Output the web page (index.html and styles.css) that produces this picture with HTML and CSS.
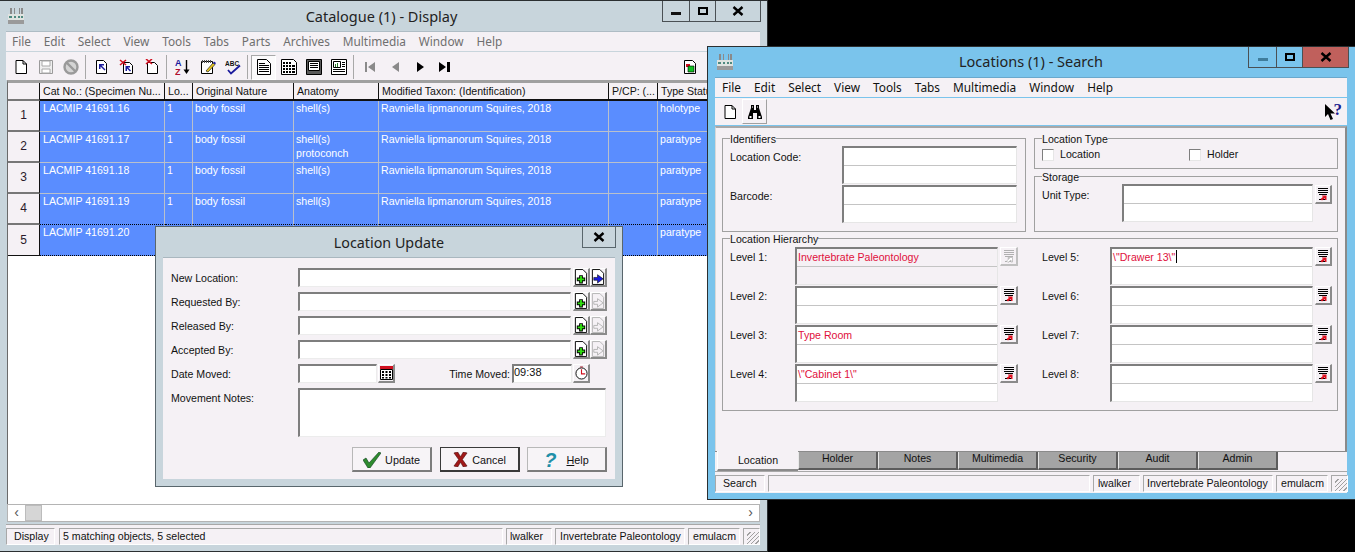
FILE: index.html
```html
<!DOCTYPE html>
<html>
<head>
    <meta charset="utf-8">
    <title>Catalogue (1) - Display</title>
    <link rel="stylesheet" href="styles.css">
</head>
<body>

<svg class="defs" xmlns="http://www.w3.org/2000/svg">
    <symbol id="i-app" viewBox="0 0 16 16">
        <path d="M2 0h2v6H2zM6 0h1v6H6zM11 0h1v6h-1zM13 0h2v6h-2z" fill="#8a8a8a"/>
        <path d="M0 6h16v6H0z" fill="#dfe3e0"/>
        <path d="M1 8h3v2H1zM6 8h2v2H6zM10 8h2v2h-2zM13 8h2v2h-2z" fill="#4f8a80"/>
        <path d="M0 12h16v4H0z" fill="#9a9a9a"/>
    </symbol>
    <symbol id="i-new" viewBox="0 0 16 16">
        <path d="M3 1.500h7l3.500 3.500v9.500H3z" fill="#fff" stroke="#000"/>
        <path d="M10 1.500V5h3.500" fill="none" stroke="#000"/>
    </symbol>
    <symbol id="i-save" viewBox="0 0 16 16">
        <path d="M1.500 1.500h13v13h-13z" fill="#efefef" stroke="#9a9a9a"/>
        <path d="M4 2h8v5H4zM4 10h8v4H4z" fill="#fff" stroke="#a8a8a8"/>
    </symbol>
    <symbol id="i-no" viewBox="0 0 16 16">
        <circle cx="8" cy="8" r="6.500" fill="#d4d4d4" stroke="#9a9a9a" stroke-width="2.400"/>
        <path d="M3.500 3.500l9 9" stroke="#9a9a9a" stroke-width="2.400"/>
    </symbol>
    <symbol id="i-doc-up" viewBox="0 0 16 16">
        <path d="M2.500 1.500h7l3 3v10h-10z" fill="#fff" stroke="#000"/>
        <path d="M5 5v5h1.500V7.500l4 4 1-1-4-4H10V5z" fill="#1a1a9c"/>
    </symbol>
    <symbol id="i-doc-x" viewBox="0 0 16 16">
        <path d="M4.500 3.500h6l3 3v8h-9z" fill="#fff" stroke="#000"/>
        <path d="M6.500 7v5H8V9.500l3 3 1-1-3-3h2V7z" fill="#1a1a9c"/>
        <path d="M1 1l6 5M7 1L1 6" stroke="#d01020" stroke-width="1.600"/>
    </symbol>
    <symbol id="i-doc-x2" viewBox="0 0 16 16">
        <path d="M3.500 3.500h7l3 3v8h-10z" fill="#fff" stroke="#000"/>
        <path d="M2 0l6 5M8 0L2 5" stroke="#d01020" stroke-width="1.600"/>
    </symbol>
    <symbol id="i-note" viewBox="0 0 16 16">
        <path d="M1.500 2.500h11v12h-11z" fill="#fff" stroke="#000"/>
        <path d="M2.500 1v3M4.500 1v3M6.500 1v3M8.500 1v3M10.500 1v3" stroke="#555"/>
        <path d="M6 12l7-8 2 1.500-7 7.500z" fill="#e8c820" stroke="#222" stroke-width=".7"/>
        <path d="M13 4l2 1.500 1-1.500-2-1.500z" fill="#1a1a9c"/>
    </symbol>
    <symbol id="i-form" viewBox="0 0 16 16">
        <path d="M1.500 .5h9l4 4v11h-13z" fill="#fff" stroke="#000"/>
        <path d="M3 4.500h6M3 6.500h10M3 8.500h10M3 10.500h10M3 12.500h10" stroke="#000"/>
    </symbol>
    <symbol id="i-grid" viewBox="0 0 16 16">
        <path d="M.5 .5h12l3 3v12H.5z" fill="#fff" stroke="#000"/>
        <path d="M2 3h2v2H2zM5 3h2v2H5zM8 3h2v2H8zM2 6h2v2H2zM5 6h2v2H5zM8 6h2v2H8zM11 6h3v2h-3zM2 9h2v2H2zM5 9h2v2H5zM8 9h2v2H8zM11 9h3v2h-3zM2 12h2v2H2zM5 12h2v2H5zM8 12h2v2H8zM11 12h3v2h-3z" fill="#000"/>
    </symbol>
    <symbol id="i-page" viewBox="0 0 16 16">
        <path d="M.5 .5h15v15H.5z" fill="#5a5a5a" stroke="#000"/>
        <path d="M2.500 2.500h11v9h-11z" fill="#fff" stroke="#000"/>
        <path d="M4 4.500h8M4 6.500h8M4 8.500h8" stroke="#000"/>
    </symbol>
    <symbol id="i-media" viewBox="0 0 16 16">
        <path d="M.5 .5h15v15H.5z" fill="#fff" stroke="#000"/>
        <path d="M2.500 2.500h7v6h-7z" fill="#fff" stroke="#000"/>
        <path d="M4 5h1v3H4zM6 4h1v4H6z" fill="#2a7a2a"/>
        <path d="M11 3.500h3M11 5.500h3M11 7.500h3M2 10.500h12M2 12.500h12" stroke="#000"/>
    </symbol>
    <symbol id="i-first" viewBox="0 0 16 16">
        <path d="M3 3h2v10H3zM13 3v10L6 8z"/>
    </symbol>
    <symbol id="i-prev" viewBox="0 0 16 16">
        <path d="M12 3v10L5 8z"/>
    </symbol>
    <symbol id="i-next" viewBox="0 0 16 16">
        <path d="M5 3v10l7-5z"/>
    </symbol>
    <symbol id="i-last" viewBox="0 0 16 16">
        <path d="M2 3v10l7-5zM10 3h3v10h-3z"/>
    </symbol>
    <symbol id="i-doc-green" viewBox="0 0 16 16">
        <path d="M2.500 1.500h8l3 3v10h-11z" fill="#fff" stroke="#000"/>
        <path d="M4 5h4v3H4z" fill="#d01020"/>
        <path d="M6 7h6v6H6z" fill="#10c020" stroke="#000" stroke-width=".6"/>
    </symbol>
    <symbol id="i-binoc" viewBox="0 0 16 16">
        <path d="M4 1h3v5h2V1h3v3l3 9v2H10V9H6v6H1v-2l3-9z" fill="#000"/>
        <path d="M2.500 12h2v2h-2zM11.500 12h2v2h-2z" fill="#fff"/>
        <path d="M5 2h1v2H5zM10 2h1v2h-1z" fill="#8a8a8a"/>
    </symbol>
    <symbol id="i-arrow" viewBox="0 0 10 16">
        <path d="M0 0v13l3-3 2.500 6 2.500-1-2.500-5.500H10z" fill="#000"/>
    </symbol>
    <symbol id="i-lookup" viewBox="0 0 14 14">
        <path d="M2 1.500h10M2 3.500h10M2 5.500h10" stroke="#000"/>
        <path d="M3 7.500h8M3 12.500h6" stroke="#000"/>
        <path d="M6 8.500h4.500V13H9v-2l-3 2.500L4.500 12l3-2.500H6z" fill="#e01020"/>
    </symbol>
    <symbol id="i-lookup-off" viewBox="0 0 14 14">
        <path d="M2 1.500h10M2 3.500h10M2 5.500h10M3 7.500h8M3 12.500h6" stroke="#b0b0b0"/>
        <path d="M6 8.500h4.500V13H9v-2l-3 2.500L4.500 12l3-2.500H6z" fill="#fff" stroke="#b0b0b0" stroke-width=".7"/>
    </symbol>
    <symbol id="i-add" viewBox="0 0 15 17">
        <path d="M1.500 .5h8l4 4v12h-12z" fill="#fff" stroke="#000"/>
        <path d="M5.500 6.500h4v2.500h2.500v4H9.500v2.500h-4V13H3V9h2.500z" fill="#000"/>
        <path d="M6.500 7.500h2V10H11v2H8.500v2.500h-2V12H4v-2h2.500z" fill="#30e010"/>
    </symbol>
    <symbol id="i-go" viewBox="0 0 15 17">
        <path d="M1.500 .5h8l4 4v12h-12z" fill="#fff" stroke="#000"/>
        <path d="M3 9h4V6l6 4.500L7 15v-3H3z" fill="#1a1ae0" stroke="#000" stroke-width=".6"/>
    </symbol>
    <symbol id="i-go-off" viewBox="0 0 15 17">
        <path d="M1.500 .5h8l4 4v12h-12z" fill="none" stroke="#b4b4b4"/>
        <path d="M3 9h4V6l6 4.500L7 15v-3H3z" fill="#f5f1f5" stroke="#b4b4b4"/>
    </symbol>
    <symbol id="i-cal" viewBox="0 0 13 14">
        <path d="M0 0h13v3H0z" fill="#d01020"/>
        <path d="M.5 3.500h12v10H.5z" fill="#fff" stroke="#000"/>
        <path d="M2 5h2v2H2zM5.500 5h2v2h-2zM9 5h2v2H9zM2 8h2v2H2zM5.500 8h2v2h-2zM9 8h2v2H9zM2 11h2v1.500H2zM5.500 11h2v1.500h-2zM9 11h2v1.500H9z" fill="#000"/>
    </symbol>
    <symbol id="i-clock" viewBox="0 0 14 14">
        <circle cx="7" cy="7.500" r="6" fill="#fff" stroke="#000"/>
        <path d="M5.500 .5h3" stroke="#a01020"/>
        <path d="M7 3v5h4" fill="none" stroke="#d01020" stroke-width="1.200"/>
    </symbol>
    <symbol id="i-check" viewBox="0 0 18 16">
        <path d="M0 8l3-2 3 5L16 0l2 1L7 16H5z" fill="#2e8b2e" stroke="#0e3e1e" stroke-width=".6"/>
    </symbol>
    <symbol id="i-cross" viewBox="0 0 16 16">
        <path d="M1 1l4-1 3 5 3-5 4 1-5 7 5 7-4 1-3-5-3 5-4-1 5-7z" fill="#a01818" stroke="#4a0808" stroke-width=".6"/>
    </symbol>
    <symbol id="i-close" viewBox="0 0 12 10">
        <path d="M1.500 1l9 8M10.500 1l-9 8" stroke="#000" stroke-width="2.400"/>
    </symbol>
</svg>

<section class="win win-cat">
    <header class="titlebar">
        <svg class="app-ico"><use href="#i-app"/></svg>
        <h1 class="title title-cat">Catalogue (1) - Display</h1>
        <div class="caption">
            <span class="cap cap-min"><i class="glyph-min"></i></span>
            <span class="cap cap-max"><i class="glyph-max"></i></span>
            <span class="cap cap-close"><svg class="glyph-x"><use href="#i-close"/></svg></span>
        </div>
    </header>
    <nav class="menu menu-off">
        <span>File</span><span>Edit</span><span>Select</span><span>View</span><span>Tools</span><span>Tabs</span><span>Parts</span><span>Archives</span><span>Multimedia</span><span>Window</span><span>Help</span>
    </nav>
    <div class="toolbar">
        <span class="tb"><svg class="ico"><use href="#i-new"/></svg></span>
        <span class="tb"><svg class="ico"><use href="#i-save"/></svg></span>
        <span class="tb"><svg class="ico"><use href="#i-no"/></svg></span>
        <span class="tb-sep"></span>
        <span class="tb"><svg class="ico"><use href="#i-doc-up"/></svg></span>
        <span class="tb"><svg class="ico"><use href="#i-doc-x"/></svg></span>
        <span class="tb"><svg class="ico"><use href="#i-doc-x2"/></svg></span>
        <span class="tb-sep"></span>
        <span class="tb">
            <svg class="ico" viewBox="0 0 16 16">
                <text x="0" y="7" class="svg-az" fill="#1a1a9c">A</text>
                <text x="0" y="15.500" class="svg-az" fill="#b01030">Z</text>
                <path d="M11.500 1v10" stroke="#000" stroke-width="1.400"/>
                <path d="M8.500 10.500h6L11.500 15z" fill="#000"/>
            </svg>
        </span>
        <span class="tb"><svg class="ico"><use href="#i-note"/></svg></span>
        <span class="tb">
            <svg class="ico" viewBox="0 0 16 16">
                <text x="0" y="6.500" class="svg-abc" fill="#111">ABC</text>
                <path d="M3 11l3 3.500L15 6.500" fill="none" stroke="#1a1a9c" stroke-width="1.800"/>
            </svg>
        </span>
        <span class="tb-sep"></span>
        <span class="tb tb-on"><svg class="ico"><use href="#i-form"/></svg></span>
        <span class="tb"><svg class="ico"><use href="#i-grid"/></svg></span>
        <span class="tb"><svg class="ico"><use href="#i-page"/></svg></span>
        <span class="tb"><svg class="ico"><use href="#i-media"/></svg></span>
        <span class="tb-sep"></span>
        <span class="tb tb-grey"><svg class="ico"><use href="#i-first"/></svg></span>
        <span class="tb tb-grey"><svg class="ico"><use href="#i-prev"/></svg></span>
        <span class="tb"><svg class="ico"><use href="#i-next"/></svg></span>
        <span class="tb"><svg class="ico"><use href="#i-last"/></svg></span>
        <span class="tb tb-push"><svg class="ico"><use href="#i-doc-green"/></svg></span>
        <span class="tb"><svg class="ico"><use href="#i-new"/></svg></span>
    </div>

    <div class="gridwrap">
        <table class="grid">
            <colgroup>
                <col class="c-head"><col class="c-cat"><col class="c-lo"><col class="c-nat"><col class="c-ana"><col class="c-tax"><col class="c-pcp"><col class="c-type">
            </colgroup>
            <thead>
                <tr>
                    <th class="rowhead"></th>
                    <th>Cat No.: (Specimen Nu...</th>
                    <th>Lo...</th>
                    <th>Original Nature</th>
                    <th>Anatomy</th>
                    <th>Modified Taxon: (Identification)</th>
                    <th>P/CP: (...</th>
                    <th>Type Status</th>
                </tr>
            </thead>
            <tbody>
                <tr>
                    <th class="rowhead">1</th>
                    <td>LACMIP 41691.16</td><td>1</td><td>body fossil</td><td>shell(s)</td><td>Ravniella lipmanorum Squires, 2018</td><td></td><td>holotype</td>
                </tr>
                <tr>
                    <th class="rowhead">2</th>
                    <td>LACMIP 41691.17</td><td>1</td><td>body fossil</td><td>shell(s)<br>protoconch</td><td>Ravniella lipmanorum Squires, 2018</td><td></td><td>paratype</td>
                </tr>
                <tr>
                    <th class="rowhead">3</th>
                    <td>LACMIP 41691.18</td><td>1</td><td>body fossil</td><td>shell(s)</td><td>Ravniella lipmanorum Squires, 2018</td><td></td><td>paratype</td>
                </tr>
                <tr class="row-before-focus">
                    <th class="rowhead">4</th>
                    <td>LACMIP 41691.19</td><td>1</td><td>body fossil</td><td>shell(s)</td><td>Ravniella lipmanorum Squires, 2018</td><td></td><td>paratype</td>
                </tr>
                <tr class="row-focus">
                    <th class="rowhead">5</th>
                    <td>LACMIP 41691.20</td><td></td><td></td><td></td><td></td><td></td><td>paratype</td>
                </tr>
            </tbody>
        </table>
    </div>

    <div class="hscroll">
        <span class="sb-btn">&#8249;</span>
        <span class="sb-thumb"></span>
        <span class="sb-track"></span>
        <span class="sb-btn">&#8250;</span>
    </div>

    <footer class="status status-cat">
        <span class="st st-mode">Display</span>
        <span class="st st-fill">5 matching objects, 5 selected</span>
        <span class="st st-user">lwalker</span>
        <span class="st st-dept">Invertebrate Paleontology</span>
        <span class="st st-inst">emulacm</span>
        <span class="st st-grip"></span>
    </footer>

    <section class="dialog">
        <header class="dlg-title">
            <h2 class="dlg-name">Location Update</h2>
            <span class="dlg-close"><svg class="glyph-x"><use href="#i-close"/></svg></span>
        </header>
        <form class="dlg-body" action="javascript:">
            <div class="dlg-row">
                <label class="dlg-label">New Location:</label>
                <span class="inp inp-long"></span>
                <span class="ibtn ibtn-first"><svg class="ico-add"><use href="#i-add"/></svg></span>
                <span class="ibtn"><svg class="ico-add"><use href="#i-go"/></svg></span>
            </div>
            <div class="dlg-row">
                <label class="dlg-label">Requested By:</label>
                <span class="inp inp-long"></span>
                <span class="ibtn ibtn-first"><svg class="ico-add"><use href="#i-add"/></svg></span>
                <span class="ibtn"><svg class="ico-add"><use href="#i-go-off"/></svg></span>
            </div>
            <div class="dlg-row">
                <label class="dlg-label">Released By:</label>
                <span class="inp inp-long"></span>
                <span class="ibtn ibtn-first"><svg class="ico-add"><use href="#i-add"/></svg></span>
                <span class="ibtn"><svg class="ico-add"><use href="#i-go-off"/></svg></span>
            </div>
            <div class="dlg-row">
                <label class="dlg-label">Accepted By:</label>
                <span class="inp inp-long"></span>
                <span class="ibtn ibtn-first"><svg class="ico-add"><use href="#i-add"/></svg></span>
                <span class="ibtn"><svg class="ico-add"><use href="#i-go-off"/></svg></span>
            </div>
            <div class="dlg-row">
                <label class="dlg-label">Date Moved:</label>
                <span class="inp inp-date"></span>
                <span class="ibtn ibtn-date"><svg class="ico-cal"><use href="#i-cal"/></svg></span>
                <label class="dlg-label-time">Time Moved:</label>
                <span class="inp inp-time">09:38</span>
                <span class="ibtn ibtn-date"><svg class="ico-cal"><use href="#i-clock"/></svg></span>
            </div>
            <div class="dlg-row dlg-row-notes">
                <label class="dlg-label">Movement Notes:</label>
                <span class="inp inp-notes"></span>
            </div>
            <div class="dlg-actions">
                <button class="pbtn pbtn-update" type="button"><svg class="ico-check"><use href="#i-check"/></svg>Update</button>
                <button class="pbtn pbtn-default" type="button"><svg class="ico-cross"><use href="#i-cross"/></svg>Cancel</button>
                <button class="pbtn pbtn-help" type="button"><span class="q">?</span><span><u>H</u>elp</span></button>
            </div>
        </form>
    </section>
</section>

<section class="win win-loc">
    <header class="titlebar">
        <svg class="app-ico"><use href="#i-app"/></svg>
        <h1 class="title">Locations (1) - Search</h1>
        <div class="caption">
            <span class="cap cap-min"><i class="glyph-min glyph-dim"></i></span>
            <span class="cap cap-max"><i class="glyph-max"></i></span>
            <span class="cap cap-close cap-red"><svg class="glyph-x"><use href="#i-close"/></svg></span>
        </div>
    </header>
    <nav class="menu">
        <span>File</span><span>Edit</span><span>Select</span><span>View</span><span>Tools</span><span>Tabs</span><span>Multimedia</span><span>Window</span><span>Help</span>
    </nav>
    <div class="toolbar toolbar-loc">
        <span class="tb"><svg class="ico"><use href="#i-new"/></svg></span>
        <span class="tb tb-raised"><svg class="ico"><use href="#i-binoc"/></svg></span>
        <span class="helpmark"><svg class="ico-arrow"><use href="#i-arrow"/></svg><span class="helpq">?</span></span>
    </div>

    <div class="page">
        <div class="page-grid">
            <fieldset class="box box-ident">
                <legend>Identifiers</legend>
                <div class="ident">
                    <label class="flabel">Location Code:</label>
                    <span class="mline"></span>
                    <label class="flabel">Barcode:</label>
                    <span class="mline"></span>
                </div>
            </fieldset>
            <div class="rightcol">
                <fieldset class="box box-type">
                    <legend>Location Type</legend>
                    <div class="checks">
                        <label class="check"><i class="cbx"></i>Location</label>
                        <label class="check"><i class="cbx"></i>Holder</label>
                    </div>
                </fieldset>
                <fieldset class="box box-store">
                    <legend>Storage</legend>
                    <div class="unit">
                        <label class="flabel">Unit Type:</label>
                        <span class="mline"></span>
                        <span class="ibtn ibtn-look"><svg class="ico-look"><use href="#i-lookup"/></svg></span>
                    </div>
                </fieldset>
            </div>
            <fieldset class="box box-hier">
                <legend>Location Hierarchy</legend>
                <div class="levels">
                    <div class="lvl-col lvl-left">
                        <div class="lvl"><label class="flabel">Level 1:</label><span class="mline mline-off">Invertebrate Paleontology</span><span class="ibtn ibtn-look ibtn-off"><svg class="ico-look"><use href="#i-lookup-off"/></svg></span></div>
                        <div class="lvl"><label class="flabel">Level 2:</label><span class="mline"></span><span class="ibtn ibtn-look"><svg class="ico-look"><use href="#i-lookup"/></svg></span></div>
                        <div class="lvl"><label class="flabel">Level 3:</label><span class="mline">Type Room</span><span class="ibtn ibtn-look"><svg class="ico-look"><use href="#i-lookup"/></svg></span></div>
                        <div class="lvl"><label class="flabel">Level 4:</label><span class="mline">\"Cabinet 1\"</span><span class="ibtn ibtn-look"><svg class="ico-look"><use href="#i-lookup"/></svg></span></div>
                    </div>
                    <div class="lvl-col">
                        <div class="lvl"><label class="flabel">Level 5:</label><span class="mline mline-caret">\"Drawer 13\"</span><span class="ibtn ibtn-look"><svg class="ico-look"><use href="#i-lookup"/></svg></span></div>
                        <div class="lvl"><label class="flabel">Level 6:</label><span class="mline"></span><span class="ibtn ibtn-look"><svg class="ico-look"><use href="#i-lookup"/></svg></span></div>
                        <div class="lvl"><label class="flabel">Level 7:</label><span class="mline"></span><span class="ibtn ibtn-look"><svg class="ico-look"><use href="#i-lookup"/></svg></span></div>
                        <div class="lvl"><label class="flabel">Level 8:</label><span class="mline"></span><span class="ibtn ibtn-look"><svg class="ico-look"><use href="#i-lookup"/></svg></span></div>
                    </div>
                </div>
            </fieldset>
        </div>
    </div>

    <div class="tabs">
        <span class="tab tab-on">Location</span>
        <span class="tab">Holder</span>
        <span class="tab">Notes</span>
        <span class="tab">Multimedia</span>
        <span class="tab">Security</span>
        <span class="tab">Audit</span>
        <span class="tab">Admin</span>
    </div>

    <footer class="status status-loc">
        <span class="st st-mode">Search</span>
        <span class="st st-fill"></span>
        <span class="st st-user">lwalker</span>
        <span class="st st-dept">Invertebrate Paleontology</span>
        <span class="st st-inst">emulacm</span>
        <span class="st st-grip"></span>
    </footer>
</section>

</body>
</html>
```

FILE: styles.css
```css
*{
    padding: 0;
    margin: 0;
    box-sizing: border-box;
}
html, body{
    width: 1355px;
    height: 552px;
    overflow: hidden;
    background: #000;
}
body{
    position: relative;
    font-family: "Liberation Sans", Arial, sans-serif;
    font-size: 10.6px;
    line-height: 13px;
    color: #111;
}
.defs{
    position: absolute;
    width: 0;
    height: 0;
}
.svg-az{
    font: bold 9px "Liberation Sans", sans-serif;
}
.svg-abc{
    font: bold 6.5px "Liberation Sans", sans-serif;
}

/* windows */
.win{
    position: absolute;
    display: flex;
    flex-direction: column;
    border: 1px solid #2b2f31;
}
.win-cat{
    left: 0;
    top: 0;
    width: 768px;
    height: 552px;
    padding: 0 7px 6px 6px;
    border-left: 0;
    background: #c8d5dc;
}
.win-loc{
    left: 707px;
    top: 46px;
    width: 650px;
    height: 454px;
    padding: 0 9px 6px 7px;
    background: #7ac4ec;
}
.titlebar{
    display: grid;
    grid-template-columns: 1fr auto 1fr;
    height: 30px;
    flex: none;
}
.app-ico{
    width: 16px;
    height: 16px;
    margin: 7px 0 0 2px;
}
.title{
    font-family: "Noto Sans", sans-serif;
    font-size: 14.5px;
    font-weight: 400;
    line-height: 30px;
    color: #222;
}
.win-loc .title{
    line-height: 28px;
}
.title-cat{
    margin-right: 3px;
}
.caption{
    display: flex;
    justify-self: end;
    height: 22px;
    margin-right: -1px;
}
.win-loc .caption{
    margin-right: -2px;
}
.cap{
    display: flex;
    align-items: center;
    justify-content: center;
    height: 21px;
    border: 1px solid #4a5054;
    border-top: 0;
}
.cap-min{
    width: 28px;
}
.cap-max{
    width: 26px;
    border-left: 0;
}
.cap-close{
    width: 45px;
    border-left: 0;
}
.win-loc .cap-min{
    width: 29px;
}
.win-loc .cap-close{
    width: 46px;
}
.cap-red{
    background: #c0605c;
}
.glyph-min{
    display: block;
    width: 10px;
    height: 3px;
    margin-top: 5px;
    background: #111;
}
.glyph-dim{
    background: #3f7d9c;
}
.glyph-max{
    display: block;
    width: 10px;
    height: 8px;
    border: 2px solid #000;
}
.glyph-x{
    width: 12px;
    height: 10px;
}

/* menu and toolbars */
.menu{
    display: flex;
    gap: 13px;
    flex: none;
    height: 20px;
    padding-left: 6px;
    background: #f5f1f5;
    font-family: "Noto Sans", sans-serif;
    font-size: 11.85px;
    line-height: 18px;
    border-top: 1px solid #aebcc4;
}
.win-loc .menu{
    border-top-color: #6aa8cc;
    padding-left: 7px;
}
.menu-off{
    gap: 12.8px;
    color: #6f6f6f;
}
.toolbar{
    display: flex;
    align-items: center;
    flex: none;
    height: 28px;
    margin-top: 1px;
    padding: 2px 33px 0 2px;
    background: #f5f1f5;
}
.toolbar-loc{
    height: 27px;
    padding: 0 5px 0 2px;
}
.tb{
    display: flex;
    align-items: center;
    justify-content: center;
    flex: none;
    width: 25px;
    height: 25px;
}
.tb-on{
    border: 1px solid;
    border-color: #a8a8a8 #fff #fff #a8a8a8;
    background: #fbfafb;
}
.tb-raised{
    border: 1px solid;
    border-color: #fff #a0a0a0 #a0a0a0 #fff;
}
.tb-grey{
    fill: #8a8a8a;
}
.tb-push{
    margin-left: auto;
}
.tb-sep{
    flex: none;
    width: 6px;
    height: 24px;
    border-left: 2px solid transparent;
    box-shadow: inset 1px 0 0 #a8a8a8;
}
.ico{
    width: 16px;
    height: 16px;
}
.helpmark{
    display: flex;
    align-items: center;
    margin-left: auto;
}
.ico-arrow{
    width: 10px;
    height: 16px;
}
.helpq{
    font: bold 17px "Liberation Serif", serif;
    color: #1a1a8c;
    margin-left: -1px;
    margin-top: -3px;
}

/* catalogue grid */
.gridwrap{
    flex: 1;
    min-height: 0;
    margin: 0 0 0 1px;
    overflow: hidden;
    background: #fff;
    border-top: 3px solid #a0a0a0;
    border-left: 1px solid #6a6a6a;
}
.grid{
    table-layout: fixed;
    width: 752px;
    border-collapse: separate;
    border-spacing: 0;
}
.c-head{ width: 32px; }
.c-cat{ width: 125px; }
.c-lo{ width: 28px; }
.c-nat{ width: 101px; }
.c-ana{ width: 85px; }
.c-tax{ width: 230px; }
.c-pcp{ width: 49px; }
.c-type{ width: 102px; }
.grid thead th{
    height: 18px;
    padding: 1px 3px 0;
    background: #f5f1f5;
    font-weight: 400;
    text-align: left;
    white-space: nowrap;
    overflow: hidden;
    border-right: 1px solid #111;
    border-bottom: 2px solid #111;
    color: #111;
}
.grid td{
    height: 31px;
    padding: 0 3px;
    vertical-align: top;
    line-height: 14px;
    background: #5a8dff;
    color: #fff;
    white-space: nowrap;
    overflow: hidden;
    border-right: 1px solid #b9c0cc;
    border-bottom: 1px solid #b9c0cc;
}
.grid td + td{
    padding-left: 2px;
}
.grid tbody .rowhead{
    height: 31px;
    background: #f5f1f5;
    font-size: 12px;
    font-weight: 400;
    color: #2a1a2a;
    text-align: center;
    border-right: 1px solid #111;
    border-bottom: 2px solid #777;
}
.grid thead .rowhead{
    border-bottom: 2px solid #777;
}
.row-before-focus td,
.row-focus td{
    border-bottom: 1px dotted #000;
}
.grid .row-focus .rowhead{
    border-bottom: 1px solid #111;
}

/* scrollbar and status */
.hscroll{
    display: flex;
    flex: none;
    height: 18px;
    margin: 0 0 0 1px;
    background: #fff;
    border: 1px solid #b4b4b4;
}
.sb-btn{
    flex: none;
    width: 17px;
    font-size: 14px;
    line-height: 14px;
    text-align: center;
    color: #555;
}
.sb-thumb{
    flex: none;
    width: 17px;
    background: #d6d6d6;
    border: 1px solid #bcbcbc;
}
.sb-track{
    flex: 1;
}
.status{
    display: flex;
    gap: 3px;
    flex: none;
    height: 21px;
    margin-top: 2px;
    padding-top: 3px;
    background: #f5f1f5;
    border-top: 1px solid #a8a8a8;
}
.st{
    display: block;
    flex: none;
    height: 17px;
    padding: 1px 0 0 4px;
    white-space: nowrap;
    border: 1px solid;
    border-color: #a8a8a8 #fff #fff #a8a8a8;
}
.status-cat .st-mode{ width: 49px; margin-right: 1px; padding-left: 7px; }
.status-cat .st-fill{ width: 444px; padding-left: 3px; }
.status-cat .st-user{ width: 46px; padding-left: 3px; }
.status-cat .st-dept{ width: 130px; }
.status-cat .st-inst{ width: 52px; }
.status-loc .st-mode{ width: 50px; padding-left: 7px; }
.status-loc .st-fill{ width: 322px; }
.status-loc .st-user{ width: 47px; }
.status-loc .st-dept{ width: 130px; padding-left: 3px; }
.status-loc .st-inst{ width: 52px; }
.st-grip{
    width: 17px;
    background: repeating-linear-gradient(135deg, transparent 0 2px, #a0a0a0 2px 3px) right bottom / 12px 12px no-repeat;
}

/* dialog over the grid */
.dialog{
    position: absolute;
    left: 155px;
    top: 225px;
    width: 468px;
    height: 261px;
    display: flex;
    flex-direction: column;
    padding: 0 7px 7px;
    background: #c8d5dc;
    border: 1px solid #59666c;
}
.dlg-title{
    display: grid;
    grid-template-columns: 1fr auto 1fr;
    flex: none;
    height: 30px;
}
.dlg-name{
    grid-column: 2;
    font-family: "Noto Sans", sans-serif;
    font-size: 14.3px;
    font-weight: 400;
    line-height: 32px;
    color: #222;
}
.dlg-close{
    grid-column: 3;
    justify-self: end;
    display: flex;
    align-items: center;
    justify-content: center;
    width: 34px;
    height: 21px;
    margin-right: -1px;
    border: 1px solid #59666c;
    border-top: 0;
}
.dlg-body{
    flex: 1;
    padding: 10px 8px 0;
    background: #f5f1f5;
    border-top: 1px solid #a9b7bf;
}
.dlg-row{
    display: flex;
    align-items: flex-start;
    height: 24px;
}
.dlg-label{
    flex: none;
    width: 127px;
    padding-top: 4px;
}
.dlg-label-time{
    flex: none;
    width: 117px;
    padding: 4px 2px 0 0;
    text-align: right;
}
.inp{
    display: block;
    flex: none;
    height: 19px;
    background: #fff;
    border: 1px solid;
    border-width: 2px 1px 1px 2px;
    border-color: #7e7e7e #ececec #ececec #7e7e7e;
}
.inp-long{ width: 273px; }
.inp-date{ width: 79px; }
.inp-time{ width: 60px; font-size: 11px; line-height: 12px; }
.inp-notes{ width: 308px; height: 49px; }
.dlg-row-notes{
    height: 59px;
}
.ibtn{
    display: flex;
    align-items: center;
    justify-content: center;
    flex: none;
    width: 17px;
    height: 19px;
    background: #f5f1f5;
    border: 1px solid;
    border-width: 1px 2px 2px 1px;
    border-color: #fff #8a8a8a #8a8a8a #fff;
}
.ibtn-first{
    margin-left: 2px;
}
.ibtn-date{
    margin-left: 1px;
}
.ico-add{
    width: 14px;
    height: 16px;
}
.ico-cal{
    width: 13px;
    height: 14px;
}
.dlg-actions{
    display: flex;
    justify-content: flex-end;
    gap: 7px;
}
.pbtn{
    display: flex;
    align-items: center;
    justify-content: center;
    gap: 4px;
    width: 80px;
    height: 25px;
    padding-top: 1px;
    font: 10.8px "Liberation Sans", sans-serif;
    color: #111;
    background: #f7f4f7;
    border: 1px solid;
    border-width: 1px 2px 2px 1px;
    border-color: #b8b8b8 #7c7c7c #7c7c7c #b8b8b8;
}
.pbtn-update{
    margin-right: 1px;
}
.pbtn-default{
    border-color: #3a3a3a;
}
.pbtn-help{
    gap: 10px;
}
.ico-check{
    width: 18px;
    height: 16px;
}
.ico-cross{
    width: 15px;
    height: 15px;
}
.q{
    font: bold italic 20px "Liberation Sans", sans-serif;
    line-height: 20px;
    color: #1f8fa8;
}

/* locations form */
.page{
    flex: none;
    height: 325px;
    margin-top: 1px;
    padding: 2px 0 0 6px;
    background: #f5f1f5;
    border-top: 2px solid #a8a8a8;
    border-right: 2px solid #8a8a8a;
    border-left: 1px solid #d8d8d8;
}
.page-grid{
    display: grid;
    grid-template-columns: 304px 304px;
    column-gap: 8px;
}
.box{
    min-width: 0;
    padding: 0 7px 7px;
    border: 1px solid #a0a0a0;
}
.box legend{
    padding: 3px 0 0;
    line-height: 13px;
}
.ident{
    display: grid;
    grid-template-columns: 112px 175px;
    row-gap: 1px;
}
.flabel{
    padding-top: 5px;
    white-space: nowrap;
}
.mline{
    display: block;
    height: 38px;
    padding-left: 1px;
    color: #e0103c;
    line-height: 16px;
    background: linear-gradient(#fff 17px, #c4c4c4 17px, #c4c4c4 18px, #fff 18px);
    border: 1px solid;
    border-width: 2px 1px 1px 2px;
    border-color: #7e7e7e #e6e6e6 #e6e6e6 #7e7e7e;
}
.mline-off{
    background: linear-gradient(#f5f1f5 17px, #c4c4c4 17px, #c4c4c4 18px, #f5f1f5 18px);
}
.mline-caret::after{
    content: "";
    display: inline-block;
    width: 1px;
    height: 13px;
    margin-left: 1px;
    vertical-align: -2px;
    background: #000;
}
.rightcol{
    display: flex;
    flex-direction: column;
}
.box-type{
    height: 39px;
}
.checks{
    display: grid;
    grid-template-columns: 147px auto;
    padding-top: 2px;
}
.check{
    display: flex;
    align-items: center;
    gap: 6px;
}
.cbx{
    display: block;
    width: 12px;
    height: 12px;
    background: #fff;
    border: 1px solid;
    border-color: #7e7e7e #e6e6e6 #e6e6e6 #7e7e7e;
}
.box-store{
    margin-top: -1px;
    height: 64px;
}
.unit{
    display: grid;
    grid-template-columns: 80px 191px 19px;
}
.ibtn-look{
    width: 18px;
    margin-left: 2px;
}
.unit .ibtn-look{
    margin-top: 1px;
    width: 17px;
}
.ibtn-off{
    border-color: #fff #c0c0c0 #c0c0c0 #fff;
}
.ico-look{
    width: 14px;
    height: 14px;
}
.box-hier{
    grid-column: 1 / 3;
    margin-top: -2px;
    height: 181px;
}
.levels{
    display: grid;
    grid-template-columns: 312px 1fr;
    padding-top: 1px;
}
.lvl-col{
    display: flex;
    flex-direction: column;
    gap: 1px;
}
.lvl{
    display: grid;
    grid-template-columns: 65px 203px auto;
    align-items: start;
}
.lvl .flabel{
    padding-top: 4px;
}
.lvl-col:last-child .lvl{
    grid-template-columns: 68px 203px auto;
}
.lvl-col:last-child .ibtn{
    width: 17px;
}

/* tabs */
.tabs{
    display: flex;
    flex: none;
    height: 21px;
    padding-left: 2px;
    background: #f5f1f5;
    border-top: 1px solid #8a8a8a;
    border-bottom: 1px solid #a8a8a8;
}
.tab{
    flex: none;
    width: 80px;
    height: 18px;
    text-align: center;
    line-height: 13px;
    color: #111;
    background: #a4a4a4;
    border: 1px solid;
    border-width: 0 2px 2px 1px;
    border-color: #6a6a6a #5c5c5c #5c5c5c #e8e8e8;
}
.tab-on{
    width: 81px;
    height: 20px;
    margin-top: -1px;
    line-height: 19px;
    background: #f5f1f5;
    border-width: 0 0 2px 1px;
    border-color: #8a8a8a #8a8a8a #8a8a8a #fff;
}
.status-loc{
    border-top: 0;
    margin-top: 0;
    height: 21px;
}
```
